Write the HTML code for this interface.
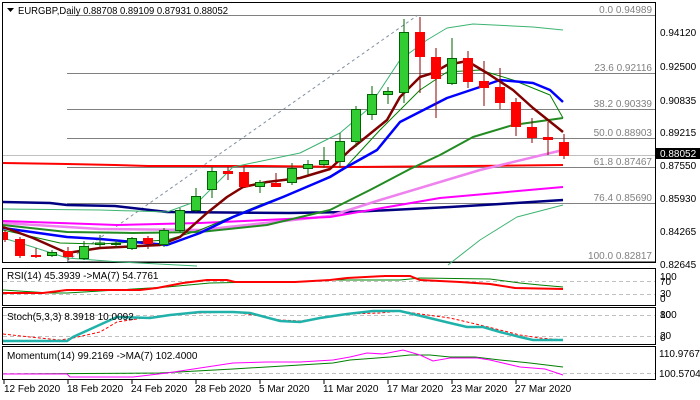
<!DOCTYPE html>
<html><head><meta charset="utf-8"><style>
html,body{margin:0;padding:0;background:#fff;}
svg{display:block;font-family:"Liberation Sans",sans-serif;}
</style></head><body>
<svg width="700" height="400" viewBox="0 0 700 400" xmlns="http://www.w3.org/2000/svg">
<rect width="700" height="400" fill="#fff"/>
<rect x="2.5" y="2.5" width="653" height="260" fill="none" stroke="#000"/>
<rect x="2.5" y="268.5" width="653" height="37" fill="none" stroke="#000"/>
<rect x="2.5" y="307.5" width="653" height="37" fill="none" stroke="#000"/>
<rect x="2.5" y="346.5" width="653" height="33" fill="none" stroke="#000"/>

<g stroke="#808080" stroke-width="1">
<line x1="67" y1="15.5" x2="655" y2="15.5"/>
<line x1="67" y1="73.5" x2="655" y2="73.5"/>
<line x1="67" y1="109.5" x2="655" y2="109.5"/>
<line x1="67" y1="138.5" x2="655" y2="138.5"/>
<line x1="67" y1="167.5" x2="655" y2="167.5"/>
<line x1="67" y1="203.5" x2="655" y2="203.5"/>
<line x1="67" y1="261.5" x2="655" y2="261.5"/>
</g>
<line x1="3" y1="155.5" x2="655" y2="155.5" stroke="#c0c0c0"/>
<line x1="67" y1="261" x2="418" y2="15" stroke="#8090a0" stroke-dasharray="3,3"/>
<g fill="#808080" font-size="10" text-anchor="end">
<text x="652" y="13">0.0 0.94989</text>
<text x="652" y="71">23.6 0.92116</text>
<text x="652" y="107">38.2 0.90339</text>
<text x="652" y="136">50.0 0.88903</text>
<text x="652" y="165">61.8 0.87467</text>
<text x="652" y="201">76.4 0.85690</text>
<text x="652" y="259">100.0 0.82817</text>
</g>

<g fill="none" stroke-linejoin="round">
<polyline stroke="#ff0000" stroke-width="2" points="3,163 67,164 115,165 148,166 260,166 350,167 470,166 563,165"/>
<polyline stroke="#000080" stroke-width="2.5" points="3,202 50,203 67,205 115,206 167,212 290,213 350,212 450,207 500,204 563,200"/>
<polyline stroke="#ee82ee" stroke-width="2.5" points="3,223 100,229 200,230 330,216 380,200 480,170 563,150"/>
<polyline stroke="#ff00ff" stroke-width="2" points="3,221 117,225 200,223 330,217 440,198 563,187"/>
<polyline stroke="#3cb371" stroke-width="1" points="3,209 100,210 167,212 200,200 233,167 300,153 340,133 367,110 400,60 427,40 447,28 473,24 533,27 563,30"/>
<polyline stroke="#3cb371" stroke-width="1" points="3,238 33,247 67,258 120,262 197,266"/>
<polyline stroke="#3cb371" stroke-width="1" points="448,265 480,240 517,217 563,205"/>
<polyline stroke="#008000" stroke-width="1" points="3,230 60,243 100,244 167,240 200,230 260,205 300,190 343,170 380,130 420,90 447,72 480,70 513,80 550,95 563,118"/>
<polyline stroke="#228b22" stroke-width="2" points="3,225 67,232 133,233 200,232 267,225 330,210 370,190 410,169 440,155 473,137 513,125 563,118"/>
<polyline stroke="#0000ff" stroke-width="2.5" points="3,228 67,237 100,239 167,245 200,233 233,217 283,197 330,177 343,169 377,150 400,122 447,98 480,87 500,80 533,83 550,90 563,102"/>
<polyline stroke="#800000" stroke-width="2.5" points="3,227 33,238 67,253 100,248 160,245 180,237 207,213 227,197 243,187 267,182 300,178 330,169 350,150 387,120 400,97 420,77 433,73 447,65 467,61 487,73 513,90 533,108 563,132"/>
</g>

<g stroke-width="1">
<g stroke="#8b0000"><line x1="5" y1="230" x2="5" y2="242"/><line x1="20" y1="237" x2="20" y2="258"/><line x1="36" y1="248" x2="36" y2="258"/><line x1="68" y1="247" x2="68" y2="260"/><line x1="148" y1="236" x2="148" y2="249"/><line x1="228" y1="167" x2="228" y2="180"/><line x1="244" y1="167" x2="244" y2="188"/><line x1="276" y1="173" x2="276" y2="187"/><line x1="420" y1="17" x2="420" y2="93"/><line x1="436" y1="48" x2="436" y2="118"/><line x1="468" y1="51" x2="468" y2="88"/><line x1="484" y1="61" x2="484" y2="106"/><line x1="500" y1="68" x2="500" y2="109"/><line x1="516" y1="98" x2="516" y2="136"/><line x1="532" y1="118" x2="532" y2="143"/><line x1="548" y1="122" x2="548" y2="155"/><line x1="564" y1="134" x2="564" y2="159"/></g>
<g stroke="#006400"><line x1="52" y1="250" x2="52" y2="257"/><line x1="84" y1="241" x2="84" y2="260"/><line x1="100" y1="235" x2="100" y2="247"/><line x1="116" y1="240" x2="116" y2="248"/><line x1="132" y1="237" x2="132" y2="250"/><line x1="164" y1="228" x2="164" y2="247"/><line x1="180" y1="208" x2="180" y2="232"/><line x1="196" y1="188" x2="196" y2="212"/><line x1="212" y1="167" x2="212" y2="198"/><line x1="260" y1="180" x2="260" y2="193"/><line x1="292" y1="163" x2="292" y2="185"/><line x1="308" y1="160" x2="308" y2="175"/><line x1="324" y1="147" x2="324" y2="168"/><line x1="340" y1="133" x2="340" y2="168"/><line x1="356" y1="106" x2="356" y2="147"/><line x1="372" y1="86" x2="372" y2="120"/><line x1="388" y1="87" x2="388" y2="104"/><line x1="404" y1="19" x2="404" y2="103"/><line x1="452" y1="38" x2="452" y2="85"/></g>
<g fill="#ff0000"><rect x="3" y="232" width="5" height="8"/><rect x="15" y="239" width="10" height="17"/><rect x="31" y="255" width="10" height="2"/><rect x="63" y="251" width="10" height="6"/><rect x="143" y="238" width="10" height="6"/><rect x="223" y="171" width="10" height="3"/><rect x="239" y="172" width="10" height="15"/><rect x="271" y="183" width="10" height="4"/><rect x="415" y="32" width="10" height="25"/><rect x="431" y="57" width="10" height="22"/><rect x="463" y="58" width="10" height="24"/><rect x="479" y="81" width="10" height="7"/><rect x="495" y="87" width="10" height="16"/><rect x="511" y="102" width="10" height="25"/><rect x="527" y="127" width="10" height="11"/><rect x="543" y="137" width="10" height="3"/><rect x="559" y="142" width="10" height="14"/></g>
<g fill="#32cd32" stroke="#006400"><rect x="47.5" y="252.5" width="9" height="3"/><rect x="79.5" y="246.5" width="9" height="12"/><rect x="95.5" y="243" width="9" height="1.5"/><rect x="111.5" y="243.5" width="9" height="1"/><rect x="127.5" y="238.5" width="9" height="10"/><rect x="159.5" y="230.5" width="9" height="14"/><rect x="175.5" y="210.5" width="9" height="20"/><rect x="191.5" y="196.5" width="9" height="14"/><rect x="207.5" y="171.5" width="9" height="18"/><rect x="255.5" y="182.5" width="9" height="4"/><rect x="287.5" y="168.5" width="9" height="14"/><rect x="303.5" y="164.5" width="9" height="4"/><rect x="319.5" y="160.5" width="9" height="4"/><rect x="335.5" y="141.5" width="9" height="20"/><rect x="351.5" y="109.5" width="9" height="32"/><rect x="367.5" y="94.5" width="9" height="20"/><rect x="383.5" y="91.5" width="9" height="3"/><rect x="399.5" y="32.5" width="9" height="60"/><rect x="447.5" y="58.5" width="9" height="25"/></g>
</g>

<path d="M7 8 L14 8 L10.5 12 Z" fill="#000"/>
<text x="18" y="14" font-size="10" fill="#000" textLength="210" lengthAdjust="spacingAndGlyphs">EURGBP,Daily  0.88708 0.89109 0.87931 0.88052</text>

<g font-size="10" fill="#000">
<text x="660" y="36">0.94120</text>
<text x="660" y="70">0.92500</text>
<text x="660" y="104">0.90835</text>
<text x="660" y="136">0.89215</text>
<text x="660" y="169">0.87550</text>
<text x="660" y="202">0.85930</text>
<text x="660" y="235">0.84265</text>
<text x="660" y="268">0.82645</text>
</g>
<rect x="656" y="148" width="44" height="11" fill="#000"/>
<text x="660" y="157" font-size="10" fill="#fff">0.88052</text>

<g stroke="#c0c0c0" stroke-dasharray="4,3"><line x1="3" y1="281.5" x2="655" y2="281.5"/><line x1="3" y1="294.5" x2="655" y2="294.5"/>
<line x1="3" y1="315.5" x2="655" y2="315.5"/><line x1="3" y1="336.5" x2="655" y2="336.5"/><line x1="3" y1="373.5" x2="655" y2="373.5"/></g>
<polyline fill="none" stroke="#008000" stroke-width="1" points="3,290 50,293 67,293 117,290 167,287 210,283 260,282 300,282 330,280 400,280 420,278 490,279 520,283 540,285 563,287"/>
<polyline fill="none" stroke="#ff0000" stroke-width="2" points="3,293 43,293 67,290 140,290 157,288 183,283 207,280 227,280 235,282 295,282 330,280 347,278 385,276 410,276 420,280 460,282 490,284 515,288 563,289"/>
<text x="7" y="279" font-size="10" fill="#000">RSI(14) 45.3939  -&gt;MA(7) 54.7761</text>
<g font-size="10" fill="#000"><text x="660" y="280">100</text><text x="660" y="285">70</text><text x="660" y="297">30</text><text x="660" y="302">0</text></g>

<polyline fill="none" stroke="#ff0000" stroke-width="1" stroke-dasharray="3,2" points="3,334 30,337 60,340 73,338 100,332 117,322 150,317 170,315 200,313 233,312 260,316 280,320 300,321 320,318 347,314 380,313 400,311 420,314 450,318 480,325 500,330 520,335 540,338 563,340"/>
<polyline fill="none" stroke="#20b2aa" stroke-width="2.5" points="3,341 67,341 73,337 117,317 150,318 170,315 200,312 233,312 250,313 280,321 300,322 320,318 347,314 373,311 400,311 417,315 450,323 467,327 483,327 500,332 520,337 533,340 563,340"/>
<text x="7" y="320" font-size="10" fill="#000">Stoch(5,3,3) 8.3918 10.0092</text>
<g font-size="10" fill="#000"><text x="660" y="318">100</text><text x="660" y="318">80</text><text x="660" y="339">20</text><text x="660" y="341">0</text></g>

<polyline fill="none" stroke="#008000" stroke-width="1" points="3,374 160,373 233,369 300,365 333,363 350,360 390,357 410,355 430,355 450,357 475,357 500,360 530,363 563,367"/>
<polyline fill="none" stroke="#ff00ff" stroke-width="1" points="3,374 67,374 70,377 133,377 167,373 200,368 233,363 267,362 300,362 333,360 350,357 367,353 383,354 403,350 420,355 433,361 450,358 477,358 490,360 520,367 545,369 563,375"/>
<text x="7" y="359" font-size="10" fill="#000">Momentum(14) 99.2169  -&gt;MA(7) 102.4000</text>
<g font-size="10" fill="#000"><text x="659" y="357">110.9767</text><text x="659" y="377">100.5704</text></g>

<g stroke="#000"><line x1="4" y1="380" x2="4" y2="384"/><line x1="68" y1="380" x2="68" y2="384"/><line x1="132" y1="380" x2="132" y2="384"/><line x1="196" y1="380" x2="196" y2="384"/><line x1="260" y1="380" x2="260" y2="384"/><line x1="324" y1="380" x2="324" y2="384"/><line x1="388" y1="380" x2="388" y2="384"/><line x1="452" y1="380" x2="452" y2="384"/><line x1="516" y1="380" x2="516" y2="384"/></g>
<g font-size="10" fill="#000">
<text x="4" y="392">12 Feb 2020</text><text x="67" y="392">18 Feb 2020</text><text x="131" y="392">24 Feb 2020</text><text x="195" y="392">28 Feb 2020</text><text x="259" y="392">5 Mar 2020</text><text x="323" y="392">11 Mar 2020</text><text x="387" y="392">17 Mar 2020</text><text x="451" y="392">23 Mar 2020</text><text x="515" y="392">27 Mar 2020</text>
</g>
</svg>
</body></html>
